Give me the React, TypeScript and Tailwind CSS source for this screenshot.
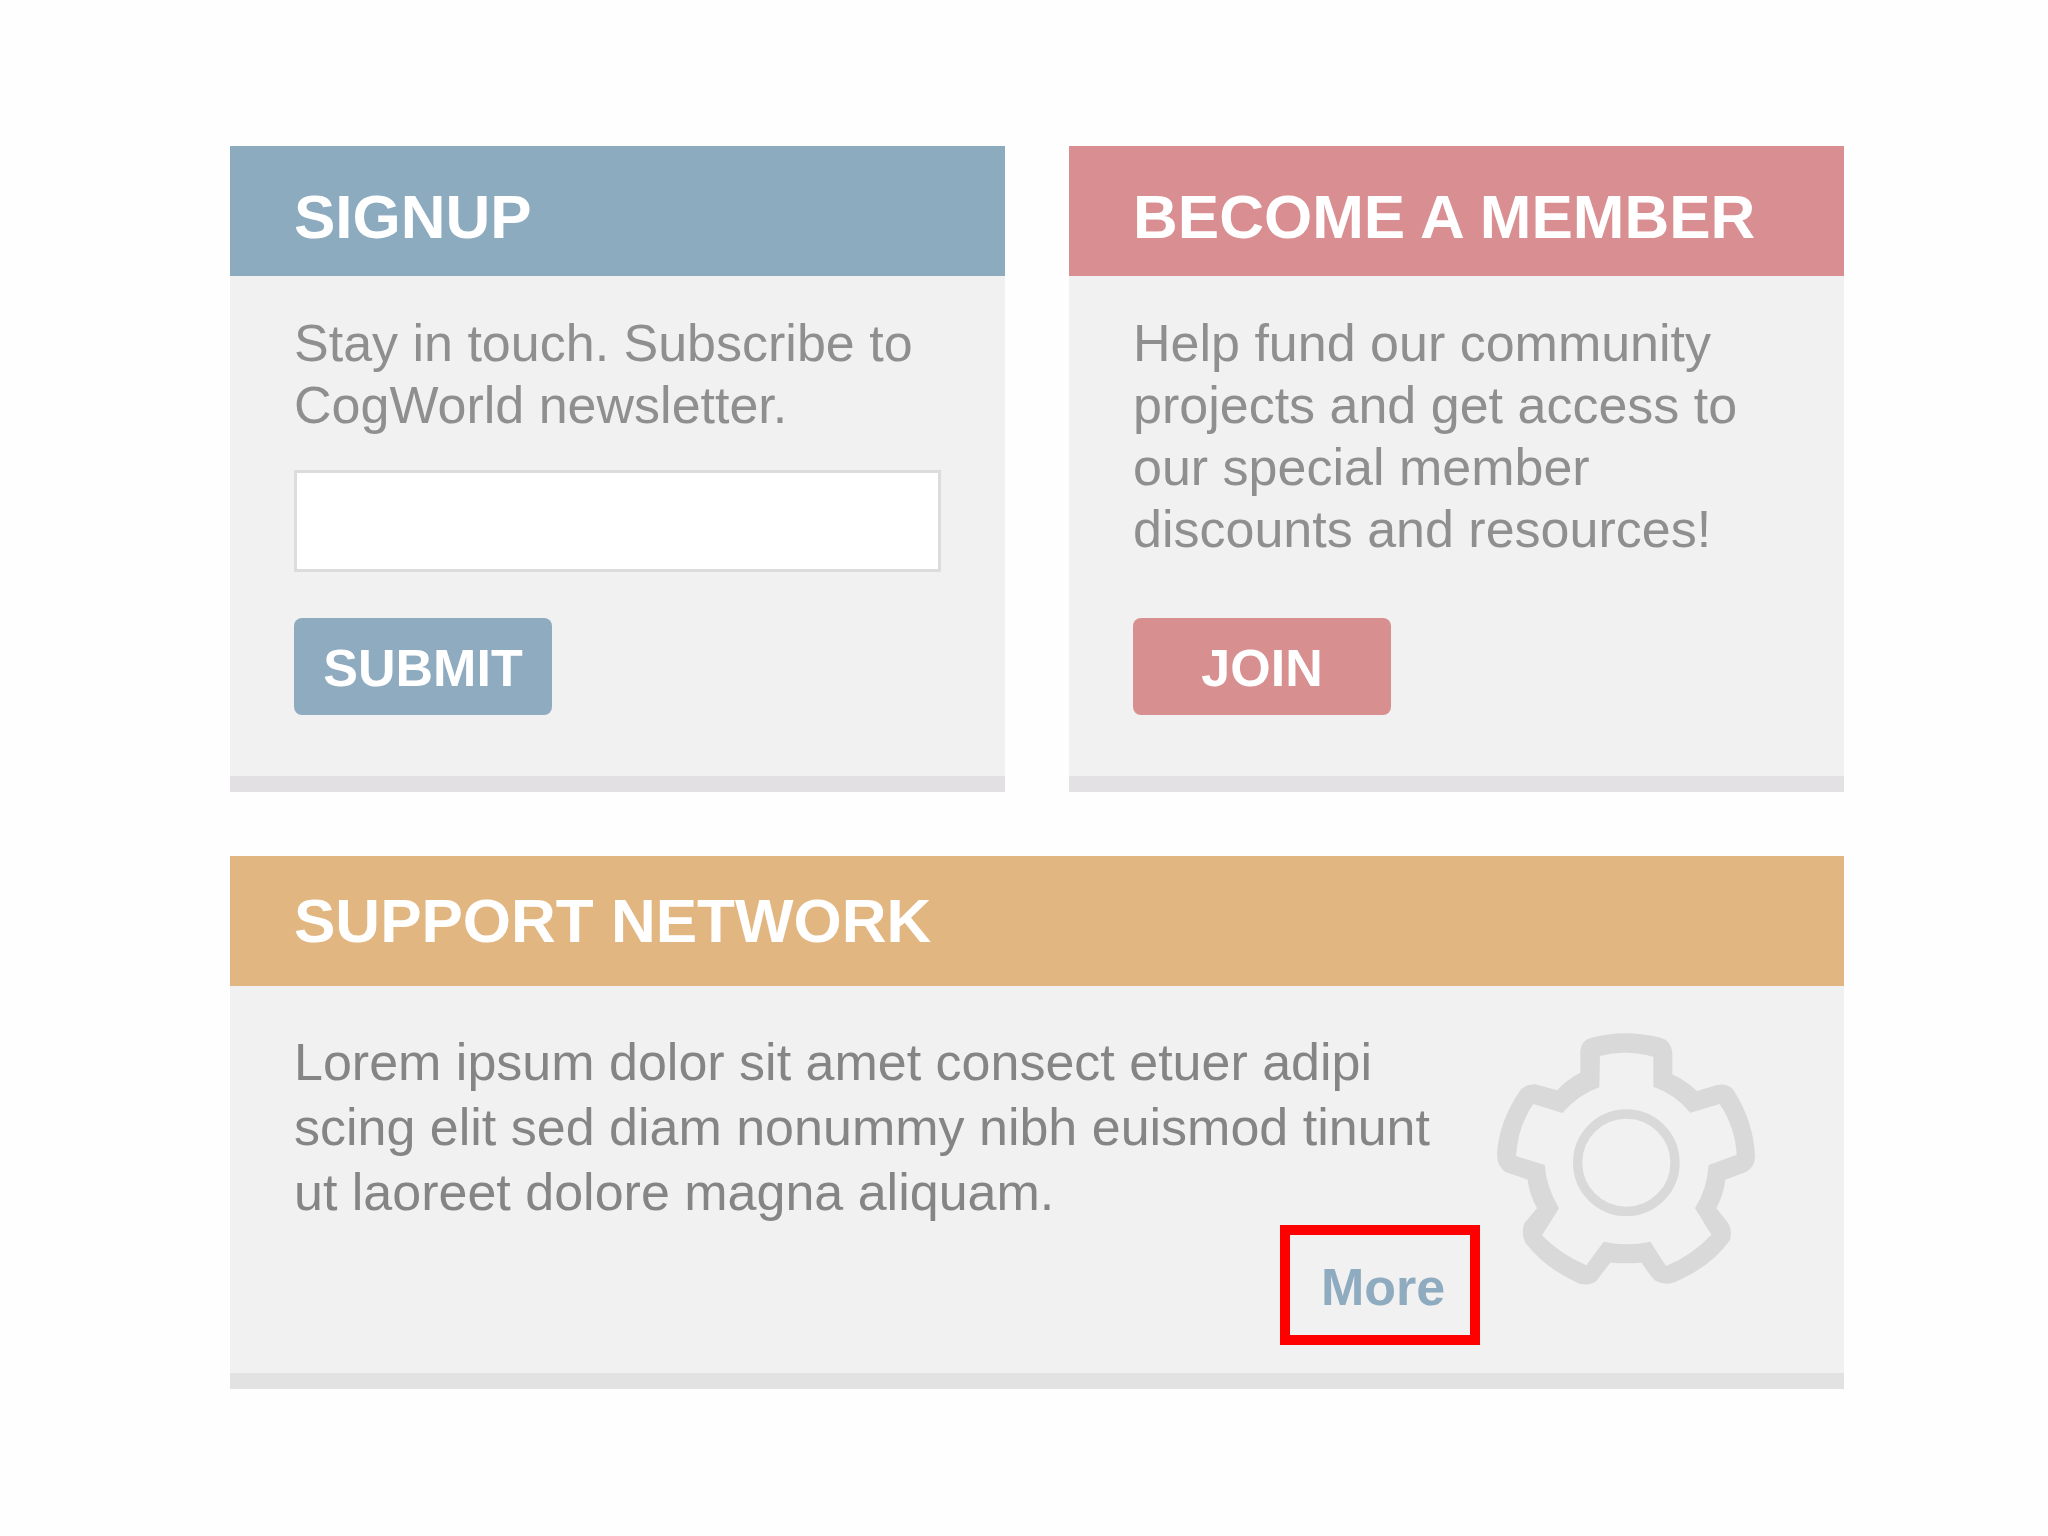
import type { ReactNode } from "react";

function Card({
  title,
  headerClass,
  bodyClass,
  className = "",
  children,
}: {
  title: string;
  headerClass: string;
  bodyClass: string;
  className?: string;
  children: ReactNode;
}) {
  return (
    <section className={`flex flex-col border-b-[16px] ${className}`}>
      <h2
        className={`flex h-[130px] items-center px-16 text-[62px] leading-[70px] font-bold text-white ${headerClass}`}
      >
        {title}
      </h2>
      <div className={`flex-1 ${bodyClass}`}>{children}</div>
    </section>
  );
}

function Gear() {
  return (
    <svg
      viewBox="112 98 780 762"
      className="mt-[46px] h-[254px] w-[260px] shrink-0"
      aria-hidden="true"
    >
      <path
        fill="#d9d9d9"
        fillRule="evenodd"
        d="M365 220V155Q367 122 398 115Q500 88 606 115Q638 124 641 160V225Q680 243 715 275L775 257Q812 250 828 278Q885 370 889 470Q890 502 862 518L800 541Q795 585 773 627L806 668Q822 690 814 722Q760 800 650 848Q620 860 592 845Q580 838 549 790Q502 794 455 790L413 845Q395 860 362 853Q260 808 200 730Q185 700 198 670L235 627Q212 585 207 541L140 518Q115 500 115 465Q120 370 180 280Q195 255 230 255L295 273Q325 240 365 220ZM424 170Q500 150 584 172V262Q650 285 695 340L783 314Q830 385 834 466L750 497Q745 570 709 627L758 706Q700 768 622 800L575 727Q505 742 435 727L383 798Q305 765 250 708L301 627Q262 560 258 497L172 470Q178 380 224 314L311 341Q360 285 422 264Z"
      />
      <circle cx="503" cy="490" r="146" fill="none" stroke="#d9d9d9" strokeWidth="28" />
    </svg>
  );
}

export default function App() {
  return (
    <main className="min-h-screen bg-[#fefefe] pt-[146px] pr-[204px] pb-[146px] pl-[230px] font-['Liberation_Sans',Arial,sans-serif] text-[52px] text-[#8f8f8f]">
      <div className="grid grid-cols-2 gap-16">
        <Card
          title="SIGNUP"
          headerClass="bg-[#8dabbf] pt-3"
          bodyClass="px-16 pt-9 pb-[61px]"
          className="border-[#e2e0e2] bg-[#f1f1f1]"
        >
          <form onSubmit={(e) => e.preventDefault()}>
            <label htmlFor="email" className="block leading-[62px]">
              Stay in touch. Subscribe to CogWorld newsletter.
            </label>
            <input
              id="email"
              type="email"
              className="mt-[34px] block h-[102px] w-full border-[3px] border-[#dcdcdc] bg-white px-6 outline-none"
            />
            <button
              type="submit"
              className="mt-[46px] block h-[97px] w-[258px] rounded-lg bg-[#8fabc0] pt-0.5 text-center leading-[62px] font-bold text-white"
            >
              SUBMIT
            </button>
          </form>
        </Card>
        <Card
          title="BECOME A MEMBER"
          headerClass="bg-[#d98e91] pt-3"
          bodyClass="px-16 pt-9 pb-[61px]"
          className="border-[#e3e1e4] bg-[#f2f1f2]"
        >
          <p className="leading-[62px]">
            Help fund our community projects and get access to our special member discounts and
            resources!
          </p>
          <button
            type="button"
            className="mt-[58px] block h-[97px] w-[258px] rounded-lg bg-[#d88f90] pt-0.5 text-center leading-[62px] font-bold text-white"
          >
            JOIN
          </button>
        </Card>
        <Card
          title="SUPPORT NETWORK"
          headerClass="bg-[#e2b681]"
          bodyClass="flex items-start gap-4 pr-[88px] pb-[28px] pl-16"
          className="col-span-2 border-[#e2e2e2] bg-[#f1f1f1]"
        >
          <div className="flex flex-1 flex-col pt-11">
            <p className="leading-[65px] text-[#858585]">
              Lorem ipsum dolor sit amet consect etuer adipi scing elit sed diam nonummy nibh
              euismod tinunt ut laoreet dolore magna aliquam.
            </p>
            <a
              href="#more"
              className="flex h-[120px] w-[200px] items-center justify-center self-end border-[10px] border-[#ff0000] pt-1 pl-1.5 font-bold text-[#8fabc0]"
            >
              More
            </a>
          </div>
          <Gear />
        </Card>
      </div>
    </main>
  );
}
